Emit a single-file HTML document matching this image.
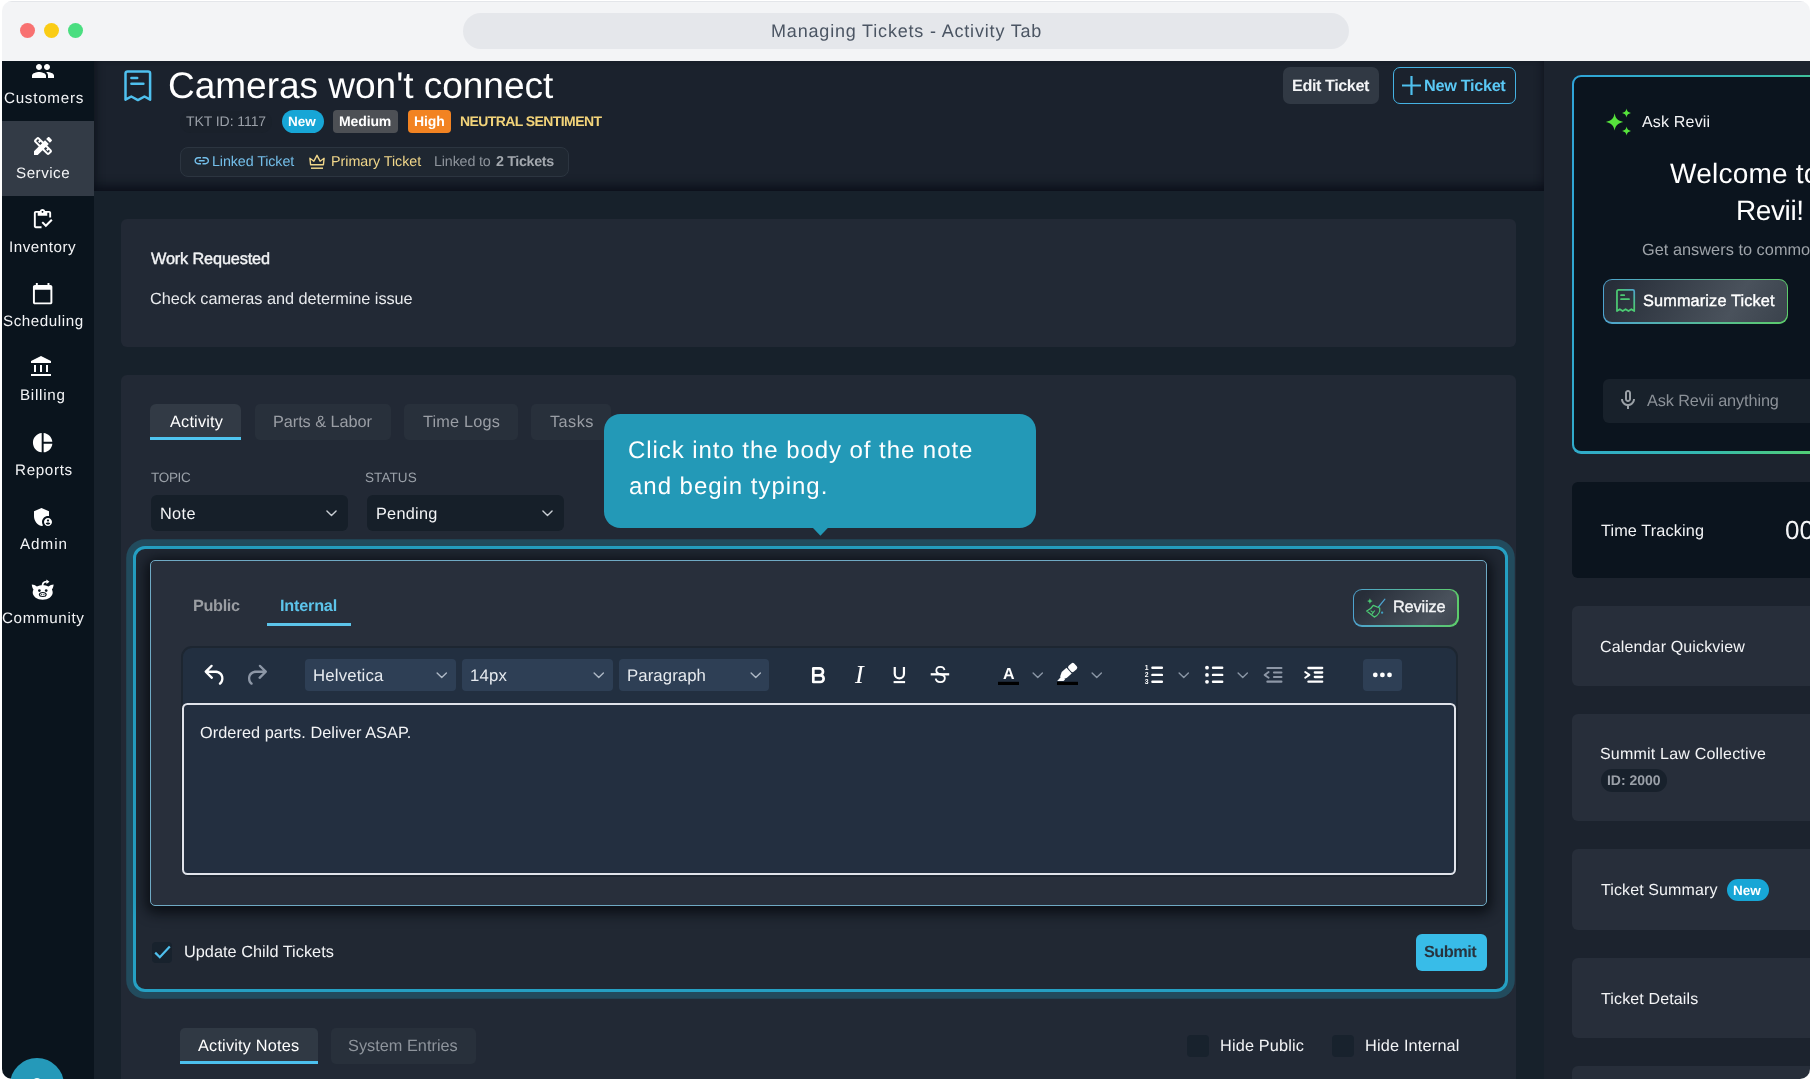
<!DOCTYPE html>
<html lang="en">
<head>
<meta charset="utf-8">
<title>Managing Tickets - Activity Tab</title>
<style>
*{box-sizing:border-box;margin:0;padding:0}
html,body{width:1812px;height:1080px;overflow:hidden;background:#fff;font-family:"Liberation Sans",sans-serif}
#win{position:absolute;left:0;top:0;width:1812px;height:1080px;background:#17212b;clip-path:inset(1px 2px 1px 2px round 10px);will-change:transform}
.b{position:absolute}
.t{position:absolute;white-space:nowrap;line-height:1;transform:rotate(.03deg);font-family:"Liberation Sans",sans-serif}
svg{position:absolute;overflow:visible}
</style>
</head>
<body>
<div id="win">
<!-- title bar -->
<div class="b" style="left:0;top:0;width:1812px;height:61px;background:#f3f4f6"></div>
<div class="b" style="left:0;top:0;width:1812px;height:2px;background:#e4e6ea"></div>
<div class="b" style="left:463px;top:13px;width:886px;height:36px;border-radius:18px;background:#e5e7eb"></div>
<div class="b" style="left:19.5px;top:22.5px;width:15px;height:15px;border-radius:50%;background:#f87171"></div>
<div class="b" style="left:43.5px;top:22.5px;width:15px;height:15px;border-radius:50%;background:#facc15"></div>
<div class="b" style="left:67.5px;top:22.5px;width:15px;height:15px;border-radius:50%;background:#4ade80"></div>

<!-- right column bg -->
<div class="b" style="left:1544px;top:61px;width:268px;height:1019px;background:#1c232e"></div>

<!-- header -->
<div class="b" style="left:94px;top:61px;width:1450px;height:129.7px;background:#1b222d;box-shadow:inset 0 -13px 10px -7px rgba(9,13,22,.72),inset 7px 0 7px -4px rgba(9,13,22,.5),inset -7px 0 7px -4px rgba(9,13,22,.4)"></div>

<!-- sidebar -->
<div class="b" style="left:0;top:61px;width:94px;height:1019px;background:#0a141d"></div>
<div class="b" style="left:0;top:121px;width:94px;height:75px;background:#333b46"></div>
<div class="b" style="left:9.8px;top:1058px;width:53.8px;height:53.8px;border-radius:50%;background:#2599b9"></div>
<div class="b" style="left:33.5px;top:1077.6px;width:6px;height:4px;border-radius:50%;background:#f4fafc"></div>

<svg style="left:31.2px;top:59px" width="24" height="24" viewBox="0 0 24 24"><path fill="#fff" d="M16 11c1.66 0 2.99-1.34 2.99-3S17.66 5 16 5c-1.66 0-3 1.34-3 3s1.34 3 3 3zm-8 0c1.66 0 2.99-1.34 2.99-3S9.66 5 8 5C6.34 5 5 6.34 5 8s1.34 3 3 3zm0 2c-2.33 0-7 1.17-7 3.5V19h14v-2.5c0-2.33-4.67-3.5-7-3.5zm8 0c-.29 0-.62.02-.97.05 1.16.84 1.97 1.97 1.97 3.45V19h6v-2.5c0-2.33-4.67-3.5-7-3.5z"/></svg>
<svg style="left:31.0px;top:133.8px" width="24" height="24" viewBox="0 0 24 24"><path fill="#fff" d="M16.24 11.51l1.57-1.57-3.75-3.75-1.57 1.57-4.14-4.13c-.78-.78-2.05-.78-2.83 0l-1.9 1.9c-.78.78-.78 2.05 0 2.83l4.13 4.13L3 17.25V21h3.75l4.76-4.76 4.13 4.13c.95.95 2.23.6 2.83 0l1.9-1.9c.78-.78.78-2.05 0-2.83l-4.13-4.13zm-7.06-.44L5.04 6.94l1.89-1.9L8.2 6.31 7.02 7.5l1.41 1.41 1.19-1.19 1.45 1.45-1.89 1.9zm7.88 7.89l-4.13-4.13 1.9-1.9 1.45 1.45-1.19 1.19 1.41 1.41 1.19-1.19 1.27 1.27-1.9 1.9zM20.71 7.04c.39-.39.39-1.02 0-1.41l-2.34-2.34c-.47-.47-1.12-.29-1.41 0l-1.83 1.83 3.75 3.75 1.83-1.83z"/></svg>
<svg style="left:31.1px;top:208.1px" width="23" height="23" viewBox="0 0 24 24"><path fill="#fff" d="M5 5h2v3h10V5h2v5h2V5c0-1.1-.9-2-2-2h-4.18C14.4 1.84 13.3 1 12 1s-2.4.84-2.82 2H5c-1.1 0-2 .9-2 2v14c0 1.1.9 2 2 2h6v-2H5V5zm7-2c.55 0 1 .45 1 1s-.45 1-1 1-1-.45-1-1 .45-1 1-1zM21 11.5l-5.49 5.5-3.01-3-1.5 1.5 4.51 4.5 6.99-7z"/></svg>
<svg style="left:31.2px;top:282.4px" width="23.3" height="23.3" viewBox="0 0 24 24"><path fill="#fff" d="M20 3h-1V1h-2v2H7V1H5v2H4c-1.1 0-2 .9-2 2v16c0 1.1.9 2 2 2h16c1.1 0 2-.9 2-2V5c0-1.1-.9-2-2-2zm0 18H4V8h16v13z"/></svg>
<svg style="left:29.1px;top:355.4px" width="24" height="24" viewBox="0 0 24 24"><path fill="#fff" d="M5 17v-7h2v7zm6 0v-7h2v7zm-9 4v-2h20v2zm15-4v-7h2v7zM2 8V6l10-5 10 5v2z"/></svg>
<svg style="left:31.2px;top:431px" width="23.3" height="23.3" viewBox="0 0 24 24"><path fill="#fff" d="M11 2v20c-5.07-.5-9-4.79-9-10s3.93-9.5 9-10zm2.03 0v8.99H22c-.47-4.74-4.24-8.52-8.97-8.99zm0 11.01V22c4.74-.47 8.5-4.25 8.97-8.99h-8.97z"/></svg>
<svg style="left:31.0px;top:505px" width="24" height="24" viewBox="0 0 24 24"><path fill="#fff" d="M17 11c.34 0 .67.04 1 .09V6.27L10.5 3 3 6.27v4.91c0 4.54 3.2 8.79 7.5 9.82.55-.13 1.08-.32 1.6-.55-.69-.98-1.1-2.17-1.1-3.45 0-3.31 2.69-6 6-6zM17 13c-2.21 0-4 1.79-4 4s1.79 4 4 4 4-1.79 4-4-1.79-4-4-4zm0 1.38c.62 0 1.12.51 1.12 1.12s-.51 1.12-1.12 1.12-1.12-.51-1.12-1.12.5-1.12 1.12-1.12zm0 5.37c-.93 0-1.74-.46-2.24-1.17.05-.72 1.51-1.08 2.24-1.08s2.19.36 2.24 1.08c-.5.71-1.31 1.17-2.24 1.17z"/></svg>
<svg style="left:31.2px;top:578.6px" width="24" height="24" viewBox="0 0 24 24"><g fill="#fff"><path d="M.8 5.6c1.800.1 3.700.8 5.1 1.9 1.7-.9 3.7-1.3 5.8-1.3s4.100.4 5.8 1.3c1.4-1.1 3.3-1.8 5.1-1.9-.1 1.9-.7 3.6-1.7 5 .5.900.8 1.900.8 3 0 4.1-4.5 7.2-10 7.2s-10-3.1-10-7.2c0-1.100.3-2.100.8-3-1-1.4-1.6-3.1-1.7-5z"/><path d="M10.7 7c-.2-3 1.3-5 4.7-5.2V.5l3.1 2.2-3.1 2.2V3.6c-2.200.2-3.1 1.4-2.9 3.4z"/></g><g fill="#0a141d"><circle cx="8.4" cy="11.6" r="1.35"/><circle cx="15.2" cy="11.6" r="1.35"/><ellipse cx="11.8" cy="15.6" rx="3.9" ry="2.5"/></g><ellipse cx="11.8" cy="15.6" rx="2.8" ry="1.5" fill="#fff"/><circle cx="10.7" cy="15.6" r=".6" fill="#0a141d"/><circle cx="12.9" cy="15.6" r=".6" fill="#0a141d"/></svg>

<!-- header content -->

<svg style="left:124px;top:69.5px" width="28" height="32" viewBox="0 0 28 32"><path d="M3.500 1.4h20.6a2 2 0 0 1 2 2v26.3l-5.600-3.200-6.600 3.600-6.600-3.600-5.800 3.2V3.4a2 2 0 0 1 2-2z" fill="none" stroke="#4fc0ee" stroke-width="2.5" stroke-linejoin="round"/><path d="M7.400 8h5.800M7.400 13.8h12" stroke="#4fc0ee" stroke-width="2.5" stroke-linecap="round"/></svg>
<div class="b" style="left:179.5px;top:110.5px;width:92.5px;height:22px;border-radius:11px;background:#1a212b"></div>
<div class="b" style="left:282px;top:110px;width:42px;height:23px;border-radius:11.5px;background:#17a6d6"></div>
<div class="b" style="left:333px;top:110px;width:65px;height:23px;border-radius:4px;background:#4d5055"></div>
<div class="b" style="left:407.5px;top:110px;width:43.5px;height:23px;border-radius:4px;background:#f28322"></div>
<div class="b" style="left:179.5px;top:147px;width:389.5px;height:30px;border-radius:8px;background:#1f2731;border:1px solid #2c3540"></div>
<svg style="left:192.8px;top:152.2px" width="17.500" height="17.500" viewBox="0 0 24 24"><path fill="#74bfea" d="M3.900 12c0-1.710 1.390-3.100 3.100-3.100h4V7H7c-2.760 0-5 2.240-5 5s2.240 5 5 5h4v-1.900H7c-1.710 0-3.100-1.390-3.100-3.100zM8 13h8v-2H8v2zm9-6h-4v1.900h4c1.710 0 3.100 1.390 3.100 3.100s-1.390 3.100-3.100 3.100h-4V17h4c2.760 0 5-2.240 5-5s-2.240-5-5-5z"/></svg>
<svg style="left:308.5px;top:154px" width="16" height="16" viewBox="0 0 16 16"><path d="M1.600 10.800L.9 4.300l4 2.900L8 1.300l3.100 5.900 4-2.900-.7 6.500z" fill="none" stroke="#f0d68a" stroke-width="1.400" stroke-linejoin="round"/><path d="M2 14.200h12" stroke="#f0d68a" stroke-width="1.500"/></svg>
<div class="b" style="left:1283.3px;top:67px;width:95.8px;height:36.8px;border-radius:7px;background:#313944"></div>
<div class="b" style="left:1392.8px;top:67px;width:123.6px;height:37px;border-radius:7px;border:1.5px solid #45b2e3"></div>
<svg style="left:1402px;top:75.8px" width="19" height="19" viewBox="0 0 19 19"><path d="M9.500 0v19M0 9.500h19" stroke="#4fc0ee" stroke-width="2.200"/></svg>


<!-- cards -->
<div class="b" style="left:121px;top:219px;width:1395px;height:128px;border-radius:6px;background:#222935"></div>
<div class="b" style="left:121px;top:374.5px;width:1395px;height:720px;border-radius:6px;background:#222935"></div>


<!-- work requested card texts in TEXTS -->
<!-- tabs -->
<div class="b" style="left:150px;top:404px;width:91px;height:35.6px;border-radius:6px 6px 0 0;background:#323a45;border-bottom:3.6px solid #4fc5f0"></div>
<div class="b" style="left:255px;top:404px;width:135.5px;height:35.5px;border-radius:5px;background:#28303b"></div>
<div class="b" style="left:404px;top:404px;width:113.5px;height:35.5px;border-radius:5px;background:#28303b"></div>
<div class="b" style="left:531px;top:404px;width:80px;height:35.5px;border-radius:5px;background:#28303b"></div>
<!-- selects -->
<div class="b" style="left:151px;top:495px;width:196.5px;height:36px;border-radius:6px;background:#161f29"></div>
<div class="b" style="left:366.5px;top:495px;width:197px;height:36px;border-radius:6px;background:#161f29"></div>
<svg style="left:325.5px;top:510px" width="11" height="6.5" viewBox="0 0 12 7"><path d="M1 1l5 5 5-5" fill="none" stroke="#c9ced4" stroke-width="1.5" stroke-linecap="round" stroke-linejoin="round"/></svg>
<svg style="left:541.5px;top:510px" width="11" height="6.5" viewBox="0 0 12 7"><path d="M1 1l5 5 5-5" fill="none" stroke="#c9ced4" stroke-width="1.5" stroke-linecap="round" stroke-linejoin="round"/></svg>
<!-- highlight -->
<div class="b" style="left:132.9px;top:545.9px;width:1374.8px;height:446.6px;border-radius:12px;border:3.5px solid #25a0c3;box-shadow:0 0 0 6.8px #224b5d;background:#212833"></div>
<!-- inner panel -->
<div class="b" style="left:150px;top:559.5px;width:1337px;height:346.5px;border-radius:5px;background:#282f3b;border:1px solid #6faac4;box-shadow:0 3px 13px 4px rgba(5,8,13,.82)"></div>
<!-- internal underline -->
<div class="b" style="left:267px;top:623px;width:84px;height:3.4px;background:#5cc4ea"></div>
<!-- reviize -->
<div class="b" style="left:1353px;top:589px;width:105.5px;height:37.5px;border-radius:9px;background:linear-gradient(90deg,#4ea3cf,#5ccc6a)"></div>
<div class="b" style="left:1354.2px;top:590.2px;width:103.1px;height:35.1px;border-radius:8px;background:linear-gradient(135deg,#272e39 10%,#4a525c 75%,#3d454f)"></div>
<svg style="left:1366px;top:597.5px" width="20" height="20" viewBox="0 0 20 20"><path d="M18.9 1.1L12.5 9" stroke="#4ea3cf" stroke-width="1.2" fill="none" stroke-linecap="round"/><path d="M7.3 7.4l6.4 2.6c.7 3.4-1.6 7.2-5.4 9.1L.7 13c2.5-1 5-2.8 6.6-5.6z" fill="none" stroke="#4ccb74" stroke-width="1.250" stroke-linejoin="round"/><path d="M4.6 12.6l2.5 2M7.1 14.6l-1.3 1.7M7.1 14.6l1.7-2.1" stroke="#4ccb74" stroke-width="1.1" fill="none"/><path d="M3.9 .3l.8 2 2 .8-2 .8-.8 2-.8-2-2-.8 2-.8z" fill="#4ccb74"/><circle cx="16.1" cy="14.7" r="1.150" fill="#3f9fc0"/></svg>
<!-- tinymce container -->
<div class="b" style="left:180.5px;top:645.5px;width:1277px;height:231px;border-radius:11px;background:#222f40;border:2px solid #1d2631"></div>
<!-- toolbar selects -->
<div class="b" style="left:305px;top:658.7px;width:151px;height:32px;border-radius:4px;background:#2e3f55"></div>
<div class="b" style="left:462px;top:658.7px;width:150.5px;height:32px;border-radius:4px;background:#2e3f55"></div>
<div class="b" style="left:618.5px;top:658.7px;width:150.5px;height:32px;border-radius:4px;background:#2e3f55"></div>
<div class="b" style="left:1363px;top:658.7px;width:39px;height:32px;border-radius:4px;background:#2e3f55"></div>
<svg style="left:436px;top:672px" width="11.5" height="6.5" viewBox="0 0 12 7"><path d="M1 1l5 5 5-5" fill="none" stroke="#aeb8c5" stroke-width="1.5" stroke-linecap="round" stroke-linejoin="round"/></svg>
<svg style="left:593px;top:672px" width="11.5" height="6.5" viewBox="0 0 12 7"><path d="M1 1l5 5 5-5" fill="none" stroke="#aeb8c5" stroke-width="1.5" stroke-linecap="round" stroke-linejoin="round"/></svg>
<svg style="left:749.5px;top:672px" width="11.5" height="6.5" viewBox="0 0 12 7"><path d="M1 1l5 5 5-5" fill="none" stroke="#aeb8c5" stroke-width="1.5" stroke-linecap="round" stroke-linejoin="round"/></svg>
<svg style="left:1031.8px;top:671.8px" width="11.5" height="6.5" viewBox="0 0 12 7"><path d="M1 1l5 5 5-5" fill="none" stroke="#8a96a5" stroke-width="1.5" stroke-linecap="round" stroke-linejoin="round"/></svg>
<svg style="left:1090.8px;top:671.8px" width="11.5" height="6.5" viewBox="0 0 12 7"><path d="M1 1l5 5 5-5" fill="none" stroke="#8a96a5" stroke-width="1.5" stroke-linecap="round" stroke-linejoin="round"/></svg>
<svg style="left:1178px;top:671.8px" width="11.5" height="6.5" viewBox="0 0 12 7"><path d="M1 1l5 5 5-5" fill="none" stroke="#8a96a5" stroke-width="1.5" stroke-linecap="round" stroke-linejoin="round"/></svg>
<svg style="left:1237.3px;top:671.8px" width="11.5" height="6.5" viewBox="0 0 12 7"><path d="M1 1l5 5 5-5" fill="none" stroke="#8a96a5" stroke-width="1.5" stroke-linecap="round" stroke-linejoin="round"/></svg>
<!-- text area -->
<div class="b" style="left:182px;top:702.9px;width:1273.8px;height:171.7px;border-radius:5.5px;background:#232f40;border:2.4px solid #e0e3ea"></div>

<svg style="left:201.400px;top:661.100px" width="28.5" height="28.5" viewBox="0 0 24 24"><path fill="#fff" d="M6.4 8H12c3.7 0 6.2 2 6.8 5.1.6 2.7-.4 5.6-2.3 6.8a1 1 0 0 1-1-1.8c1.1-.6 1.8-2.7 1.4-4.6-.5-2.1-2.1-3.5-4.9-3.5H6.4l3.3 3.3a1 1 0 1 1-1.4 1.4l-5-5a1 1 0 0 1 0-1.4l5-5a1 1 0 0 1 1.4 1.4L6.4 8z"/></svg>
<svg style="left:241.500px;top:661.100px" width="28.5" height="28.5" viewBox="0 0 24 24"><g transform="translate(24 0) scale(-1 1)"><path fill="#8d97a6" d="M6.4 8H12c3.7 0 6.2 2 6.8 5.1.6 2.7-.4 5.6-2.3 6.8a1 1 0 0 1-1-1.8c1.1-.6 1.8-2.7 1.4-4.6-.5-2.1-2.1-3.5-4.9-3.5H6.4l3.3 3.3a1 1 0 1 1-1.4 1.4l-5-5a1 1 0 0 1 0-1.4l5-5a1 1 0 0 1 1.4 1.4L6.4 8z"/></g></svg>
<svg style="left:805px;top:660px" width="150" height="30" viewBox="805 660 150 30">
<path d="M813.3 668.3h6.2a3.5 3.5 0 0 1 0 7h-6.2h7a3.350 3.350 0 0 1 0 6.7h-7z" fill="none" stroke="#fff" stroke-width="2.7" stroke-linejoin="round"/>
<path d="M894.750 667v6.8a4.6 4.6 0 0 0 9.2 0v-6.8" fill="none" stroke="#fff" stroke-width="2.2"/><path d="M893.6 682.1h11.5" stroke="#fff" stroke-width="2.1"/>
<path d="M930.7 674.3h18.5" stroke="#fff" stroke-width="2.3"/>
</svg>
<svg style="left:995px;top:660px" width="110" height="30" viewBox="995 660 110 30">
<rect x="998" y="681.8" width="21" height="3.2" fill="#000"/>
<rect x="1057" y="681.8" width="21" height="3.2" fill="#000"/>
<g transform="translate(1067.3 672.300) rotate(-42)" fill="#fff"><rect x="3.4" y="-3.9" width="7.6" height="7.8" rx="2"/><path d="M2.4 -3.9h-6.4l-4.2 2.3v3.8l4.2 1.7h6.4z"/></g>
<path d="M1057.2 680.9l4.3-4.6 3.6 3.2-1.6 1.4z" fill="#fff"/>
</svg>
<svg style="left:1140px;top:660px" width="265" height="30" viewBox="1140 660 265 30">
<g stroke="#fff" stroke-width="2.4" stroke-linecap="round"><path d="M1152.4 667.7h9.5M1152.4 674.9h9.5M1152.4 681.8h9.5"/><path d="M1213 667.7h9.2M1213 674.9h9.2M1213 681.8h9.2"/></g>
<g fill="#fff"><circle cx="1207" cy="667.7" r="1.9"/><circle cx="1207" cy="674.9" r="1.9"/><circle cx="1207" cy="681.8" r="1.9"/></g>
<g fill="#fff" font-family="Liberation Sans, sans-serif" font-weight="700" font-size="6.8"><text x="1144.8" y="670.2">1</text><text x="1144.8" y="677.3">2</text><text x="1144.8" y="684.3">3</text></g>
<g stroke="#8d97a6" stroke-width="2.2" stroke-linecap="round" fill="none"><path d="M1267.4 668h14M1274 672.5h7.4M1274 677h7.4M1267.4 681.7h14"/><path d="M1268.6 672l-4 2.9 4 2.9" stroke-linejoin="round" stroke-width="1.9"/></g>
<g stroke="#fff" stroke-width="2.3" stroke-linecap="round" fill="none"><path d="M1308.4 668h13.8M1314.8 672.5h7.4M1314.8 677h7.4M1308.4 681.7h13.8"/><path d="M1305.2 672l4.2 2.9-4.2 2.9" stroke-linejoin="round" stroke-width="2"/></g>
<g fill="#fff"><circle cx="1375.3" cy="674.9" r="2.4"/><circle cx="1382.4" cy="674.9" r="2.4"/><circle cx="1389.5" cy="674.9" r="2.4"/></g>
</svg>

<!-- checkbox -->
<div class="b" style="left:151.6px;top:941.8px;width:20.8px;height:20.8px;border-radius:4px;background:#18222d"></div>
<svg style="left:153.5px;top:945px" width="17" height="14" viewBox="0 0 17 14"><path d="M1.2 7.6l4.6 4.600L15.8 1.4" fill="none" stroke="#4fc0ee" stroke-width="2.2"/></svg>
<!-- submit -->
<div class="b" style="left:1416px;top:934px;width:71px;height:37px;border-radius:6px;background:#38bce8"></div>
<!-- bottom tabs -->
<div class="b" style="left:179.5px;top:1028px;width:138px;height:35.8px;border-radius:5px 5px 0 0;background:#303944;border-bottom:3.5px solid #4cc0ee"></div>
<div class="b" style="left:331px;top:1028px;width:145px;height:35.5px;border-radius:5px;background:#28303b"></div>
<div class="b" style="left:1186.5px;top:1034.5px;width:22px;height:22px;border-radius:4px;background:#18222d"></div>
<div class="b" style="left:1332px;top:1034.5px;width:22px;height:22px;border-radius:4px;background:#18222d"></div>
<!-- tooltip -->
<div class="b" style="left:603.9px;top:413.7px;width:432.1px;height:114.3px;border-radius:16.5px;background:#2399b7"></div>
<svg style="left:812.5px;top:527.6px" width="15" height="8" viewBox="0 0 15 8"><path d="M0 0h14.8L7.4 7.7z" fill="#2399b7"/></svg>



<!-- ask revii box -->
<div class="b" style="left:1571.5px;top:74.7px;width:260px;height:379px;border-radius:9px;background:linear-gradient(100deg,#2fa4d9 0%,#34b8b0 60%,#58d36a 100%)"></div>
<div class="b" style="left:1574.1px;top:77.3px;width:258px;height:373.8px;border-radius:7px;background:#0b141e"></div>
<svg style="left:1604px;top:107.5px" width="29" height="28" viewBox="0 0 29 28"><g fill="#56e33c"><path d="M10.6 5.2c1 5.3 2.8 7.2 8.7 8.700-5.9 1.500-7.7 3.400-8.7 8.700-1-5.300-2.800-7.200-8.700-8.7 5.900-1.5 7.700-3.4 8.700-8.7z"/><path d="M22.5 .4c.6 2.7 1.5 3.7 4.7 4.500-3.200.8-4.1 1.800-4.7 4.500-.6-2.700-1.500-3.700-4.700-4.5 3.200-.8 4.100-1.8 4.700-4.5z"/><path d="M22.6 18.4c.6 2.7 1.5 3.7 4.7 4.500-3.200.8-4.1 1.800-4.7 4.500-.6-2.700-1.500-3.700-4.700-4.5 3.200-.8 4.100-1.8 4.700-4.5z"/></g></svg>
<!-- summarize -->
<div class="b" style="left:1602.8px;top:279px;width:185.5px;height:44.5px;border-radius:9px;background:linear-gradient(90deg,#4ea3cf,#5ccc6a)"></div>
<div class="b" style="left:1604px;top:280.2px;width:183.1px;height:42.1px;border-radius:8px;background:linear-gradient(120deg,#272e39 5%,#4a525c 70%,#3a424c)"></div>
<svg style="left:1615.7px;top:289px" width="19.2" height="23.6" viewBox="0 0 20 24" preserveAspectRatio="none"><defs><linearGradient id="tg" x1="0" y1="1" x2="1" y2="0"><stop offset="0" stop-color="#4ccb74"/><stop offset=".6" stop-color="#4ccb74"/><stop offset="1" stop-color="#4ea3cf"/></linearGradient></defs><path d="M2.5 1h15a1.5 1.5 0 0 1 1.5 1.5v20l-3-1.900-3 1.900-3-1.900-3 1.900-3-1.900-3 1.9v-20a1.5 1.5 0 0 1 1.500-1.5z" fill="none" stroke="url(#tg)" stroke-width="1.8" stroke-linejoin="round"/><path d="M5.2 6.3h3.4M5.2 10.3h8.4" stroke="#4ccb74" stroke-width="1.7" stroke-linecap="round"/></svg>
<!-- ask input -->
<div class="b" style="left:1602.8px;top:378.5px;width:230px;height:44.5px;border-radius:6px;background:#18212b"></div>
<svg style="left:1615.5px;top:388px" width="24" height="24" viewBox="0 0 24 24"><path fill="#9aa0a6" d="M12 14c1.660 0 3-1.340 3-3V5c0-1.660-1.340-3-3-3S9 3.340 9 5v6c0 1.660 1.340 3 3 3zm-1-9c0-.55.450-1 1-1s1 .45 1 1v6c0 .55-.45 1-1 1s-1-.45-1-1V5zm6 6c0 2.760-2.240 5-5 5s-5-2.240-5-5H5c0 3.530 2.610 6.430 6 6.920V21h2v-3.080c3.390-.49 6-3.390 6-6.920h-2z"/></svg>
<!-- cards -->
<div class="b" style="left:1571.8px;top:482px;width:260px;height:96.2px;border-radius:6px;background:#0b141e"></div>
<div class="b" style="left:1571.8px;top:606.2px;width:260px;height:79.5px;border-radius:6px;background:#272e3a"></div>
<div class="b" style="left:1571.8px;top:714px;width:260px;height:107px;border-radius:6px;background:#272e3a"></div>
<div class="b" style="left:1571.8px;top:849.2px;width:260px;height:80.5px;border-radius:6px;background:#272e3a"></div>
<div class="b" style="left:1571.8px;top:958.2px;width:260px;height:79.5px;border-radius:6px;background:#272e3a"></div>
<div class="b" style="left:1571.8px;top:1065.8px;width:260px;height:60px;border-radius:6px;background:#272e3a"></div>
<div class="b" style="left:1600.8px;top:769.2px;width:66.2px;height:22.6px;border-radius:11.3px;background:#18212c"></div>
<div class="b" style="left:1726.6px;top:879px;width:42px;height:22px;border-radius:11px;background:#17a6d6"></div>


<span class="t" style="left:770.56px;top:21.67px;font-size:18px;color:#4b5563;letter-spacing:0.82px;">Managing Tickets - Activity Tab</span>
<span class="t" style="left:3.61px;top:90.16px;font-size:15.2px;color:#f3f4f6;letter-spacing:0.73px;">Customers</span>
<span class="t" style="left:16.12px;top:164.77px;font-size:15.2px;color:#f3f4f6;letter-spacing:0.50px;">Service</span>
<span class="t" style="left:9.48px;top:238.97px;font-size:15.2px;color:#f3f4f6;letter-spacing:0.53px;">Inventory</span>
<span class="t" style="left:2.92px;top:313.36px;font-size:15.2px;color:#f3f4f6;letter-spacing:0.55px;">Scheduling</span>
<span class="t" style="left:20.21px;top:387.48px;font-size:15.2px;color:#f3f4f6;letter-spacing:0.72px;">Billing</span>
<span class="t" style="left:14.61px;top:461.67px;font-size:15.2px;color:#f3f4f6;letter-spacing:0.66px;">Reports</span>
<span class="t" style="left:20.03px;top:535.78px;font-size:15.2px;color:#f3f4f6;letter-spacing:0.98px;">Admin</span>
<span class="t" style="left:1.61px;top:609.96px;font-size:15.2px;color:#f3f4f6;letter-spacing:0.64px;">Community</span>
<span class="t" style="left:168.00px;top:66.80px;font-size:37px;color:#fff;letter-spacing:-0.01px;">Cameras won't connect</span>
<span class="t" style="left:185.97px;top:113.96px;font-size:14px;color:#9aa0a8;letter-spacing:-0.07px;">TKT ID: 1117</span>
<span class="t" style="left:288.11px;top:114.99px;font-size:13.5px;font-weight:700;color:#fff;letter-spacing:-0.01px;">New</span>
<span class="t" style="left:339.00px;top:113.97px;font-size:14px;font-weight:700;color:#fff;letter-spacing:-0.12px;">Medium</span>
<span class="t" style="left:414.00px;top:113.98px;font-size:14px;font-weight:700;color:#fff;letter-spacing:-0.07px;">High</span>
<span class="t" style="left:459.60px;top:113.92px;font-size:14px;font-weight:700;color:#f3d47a;letter-spacing:-0.59px;">NEUTRAL SENTIMENT</span>
<span class="t" style="left:212.30px;top:154.16px;font-size:14.3px;color:#74bfea;letter-spacing:-0.10px;">Linked Ticket</span>
<span class="t" style="left:330.90px;top:154.15px;font-size:14.3px;color:#f0d68a;letter-spacing:-0.03px;">Primary Ticket</span>
<span class="t" style="left:434.30px;top:154.17px;font-size:14.3px;color:#8e949c;letter-spacing:-0.15px;">Linked to</span>
<span class="t" style="left:496.35px;top:154.17px;font-size:14.3px;font-weight:700;color:#a3a8ae;letter-spacing:-0.35px;">2 Tickets</span>
<span class="t" style="left:1291.59px;top:76.66px;font-size:16.3px;font-weight:700;color:#f3f4f6;letter-spacing:-0.46px;">Edit Ticket</span>
<span class="t" style="left:1424.39px;top:76.66px;font-size:16.3px;font-weight:700;color:#5ac8f5;letter-spacing:-0.33px;">New Ticket</span>
<span class="t" style="left:150.89px;top:249.94px;font-size:16.3px;color:#f3f4f6;-webkit-text-stroke:.4px;letter-spacing:-0.15px;">Work Requested</span>
<span class="t" style="left:150.15px;top:289.86px;font-size:16.3px;color:#e8eaed;letter-spacing:-0.05px;">Check cameras and determine issue</span>
<span class="t" style="left:169.63px;top:412.57px;font-size:16.3px;color:#fff;letter-spacing:0.19px;">Activity</span>
<span class="t" style="left:272.93px;top:412.55px;font-size:16.3px;color:#9a9ea5;letter-spacing:-0.06px;">Parts &amp; Labor</span>
<span class="t" style="left:422.69px;top:412.56px;font-size:16.3px;color:#9a9ea5;letter-spacing:0.19px;">Time Logs</span>
<span class="t" style="left:549.69px;top:412.58px;font-size:16.3px;color:#9a9ea5;letter-spacing:0.45px;">Tasks</span>
<span class="t" style="left:150.57px;top:470.98px;font-size:13.5px;color:#9aa0a8;letter-spacing:-0.30px;">TOPIC</span>
<span class="t" style="left:365.00px;top:470.97px;font-size:13.5px;color:#9aa0a8;letter-spacing:0.09px;">STATUS</span>
<span class="t" style="left:160.13px;top:505.08px;font-size:16.3px;color:#f3f4f6;letter-spacing:0.37px;">Note</span>
<span class="t" style="left:375.73px;top:505.07px;font-size:16.3px;color:#f3f4f6;letter-spacing:0.26px;">Pending</span>
<span class="t" style="left:192.59px;top:596.97px;font-size:16.3px;font-weight:700;color:#9a9da2;letter-spacing:-0.35px;">Public</span>
<span class="t" style="left:280.00px;top:596.97px;font-size:16.3px;font-weight:700;color:#5cc4ea;letter-spacing:-0.23px;">Internal</span>
<span class="t" style="left:1392.52px;top:597.97px;font-size:16.3px;color:#f3f4f6;-webkit-text-stroke:.4px;letter-spacing:-0.15px;">Reviize</span>
<span class="t" style="left:312.88px;top:667.96px;font-size:16.8px;color:#e6eaef;letter-spacing:0.16px;">Helvetica</span>
<span class="t" style="left:470.19px;top:667.98px;font-size:16.8px;color:#e6eaef;letter-spacing:0.13px;">14px</span>
<span class="t" style="left:626.68px;top:667.96px;font-size:16.8px;color:#e6eaef;letter-spacing:0.07px;">Paragraph</span>
<span class="t" style="left:200.22px;top:723.89px;font-size:16.3px;color:#f3f4f6;letter-spacing:0.06px;">Ordered parts. Deliver ASAP.</span>
<span class="t" style="left:183.81px;top:942.92px;font-size:16.3px;color:#f3f4f6;letter-spacing:0.03px;">Update Child Tickets</span>
<span class="t" style="left:1424.33px;top:942.97px;font-size:16.3px;font-weight:700;color:#27343f;letter-spacing:-0.49px;">Submit</span>
<span class="t" style="left:197.83px;top:1036.95px;font-size:16.3px;color:#fff;letter-spacing:0.19px;">Activity Notes</span>
<span class="t" style="left:347.96px;top:1036.94px;font-size:16.3px;color:#8e949c;letter-spacing:0.02px;">System Entries</span>
<span class="t" style="left:1219.73px;top:1036.96px;font-size:16.3px;color:#f3f4f6;letter-spacing:0.16px;">Hide Public</span>
<span class="t" style="left:1364.73px;top:1036.95px;font-size:16.3px;color:#f3f4f6;letter-spacing:0.18px;">Hide Internal</span>
<span class="t" style="left:628.39px;top:437.83px;font-size:24px;color:#fff;letter-spacing:0.94px;">Click into the body of the note</span>
<span class="t" style="left:628.60px;top:473.90px;font-size:24px;color:#fff;letter-spacing:0.97px;">and begin typing.</span>
<span class="t" style="left:854.50px;top:662.00px;font-size:26px;color:#fff;font-family:'Liberation Serif',serif;font-style:italic;">I</span>
<span class="t" style="left:934.20px;top:664.00px;font-size:23.5px;color:#fff;transform:scaleX(.8);transform-origin:0 0;">S</span>
<span class="t" style="left:1002.80px;top:665.99px;font-size:16px;font-weight:700;color:#fff;">A</span>
<span class="t" style="left:1642.03px;top:113.97px;font-size:16px;color:#f3f4f6;letter-spacing:0.18px;">Ask Revii</span>
<span class="t" style="left:1670.09px;top:159.92px;font-size:28px;color:#fff;letter-spacing:0.23px;">Welcome to</span>
<span class="t" style="left:1735.77px;top:196.96px;font-size:28px;color:#fff;letter-spacing:-0.40px;">Revii!</span>
<span class="t" style="left:1641.57px;top:240.91px;font-size:16.3px;color:#9ea3a9;letter-spacing:0.04px;">Get answers to commo</span>
<span class="t" style="left:1813.00px;top:240.96px;font-size:16.3px;color:#9ea3a9;">n questions</span>
<span class="t" style="left:1642.93px;top:291.93px;font-size:16.3px;color:#fff;-webkit-text-stroke:.4px;letter-spacing:0.14px;">Summarize Ticket</span>
<span class="t" style="left:1646.83px;top:391.93px;font-size:16.3px;color:#8b9198;letter-spacing:-0.12px;">Ask Revii anything</span>
<span class="t" style="left:1600.69px;top:521.95px;font-size:16.3px;color:#f3f4f6;letter-spacing:0.11px;">Time Tracking</span>
<span class="t" style="left:1784.60px;top:517.15px;font-size:26px;color:#f3f4f6;">00:00:00</span>
<span class="t" style="left:1600.17px;top:638.93px;font-size:16px;color:#f3f4f6;letter-spacing:0.15px;">Calendar Quickview</span>
<span class="t" style="left:1599.56px;top:745.92px;font-size:16px;color:#f3f4f6;letter-spacing:0.20px;">Summit Law Collective</span>
<span class="t" style="left:1607.00px;top:773.27px;font-size:14px;font-weight:700;color:#9aa0a8;letter-spacing:-0.03px;">ID: 2000</span>
<span class="t" style="left:1600.69px;top:881.94px;font-size:16px;color:#f3f4f6;letter-spacing:0.11px;">Ticket Summary</span>
<span class="t" style="left:1733.11px;top:883.99px;font-size:13.5px;font-weight:700;color:#fff;letter-spacing:0.04px;">New</span>
<span class="t" style="left:1600.69px;top:990.95px;font-size:16px;color:#f3f4f6;letter-spacing:0.14px;">Ticket Details</span>
</div>
</body>
</html>
